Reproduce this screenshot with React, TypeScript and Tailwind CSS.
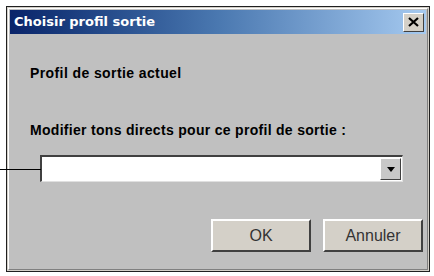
export default function App() {
  return (
    <div className="relative w-[434px] h-[276px] bg-white overflow-hidden" style={{ fontFamily: '"Liberation Sans", Arial, sans-serif' }}>
      {/* callout line */}
      <div className="absolute left-0 top-[169px] w-[41px] h-px bg-black" />

      <div className="ml-[6px] mt-[6px] w-[424px] h-[266px] border border-[#202020] bg-[#d4d0c8] p-px">
        <div className="h-full border border-white border-r-[#808080] border-b-[#808080] bg-[#c0c0c0] flex flex-col">
          <div className="mx-px mt-px h-[24px] flex items-center justify-between pl-[4px] pr-[2px] bg-gradient-to-r from-[#0a246a] via-[#4a78b0] to-[#a6caf0]">
            <span className="text-white font-bold text-[13px]" style={{ fontFamily: '"DejaVu Sans", Verdana, sans-serif' }}>
              Choisir profil sortie
            </span>
            <button className="w-[21px] h-[19px] bg-[#d4d0c8] border border-white border-r-[#404040] border-b-[#404040] flex items-center justify-center">
              <svg width="11" height="10" viewBox="0 0 11 10">
                <path d="M1 1 L10 9 M10 1 L1 9" stroke="#000" strokeWidth="2.2" />
              </svg>
            </button>
          </div>

          <div className="pl-[21px] pt-[31px] text-[14px] tracking-[0.4px] font-bold text-black leading-[16px]">Profil de sortie actuel</div>
          <div className="pl-[21px] mt-[41px] text-[14px] tracking-[0.3px] font-bold text-black leading-[16px]">
            Modifier tons directs pour ce profil de sortie :
          </div>

          <div className="ml-[31px] mt-[17px] w-[363px] h-[27px] border border-t-[#404040] border-l-[#404040] border-t-2 border-l-2 border-r-[#e0e0e0] border-b-[#e0e0e0] bg-white flex justify-end items-stretch">
            <div className="w-[21px] my-px mr-px bg-[#c8c8c8] border border-white border-r-[#404040] border-b-[#404040] flex items-center justify-center">
              <svg width="8" height="5" viewBox="0 0 8 5">
                <path d="M0 0 H8 L4 5 Z" fill="#000" />
              </svg>
            </div>
          </div>

          <div className="flex justify-end gap-[12px] pr-[4px] mt-[37px]">
            <button className="w-[100px] h-[33px] bg-[#d4d0c8] border-2 border-white border-r-[#404040] border-b-[#404040] text-[16px] text-[#333]">
              OK
            </button>
            <button className="w-[100px] h-[33px] bg-[#d4d0c8] border-2 border-white border-r-[#404040] border-b-[#404040] text-[16px] text-[#333]">
              Annuler
            </button>
          </div>
        </div>
      </div>
    </div>
  );
}
